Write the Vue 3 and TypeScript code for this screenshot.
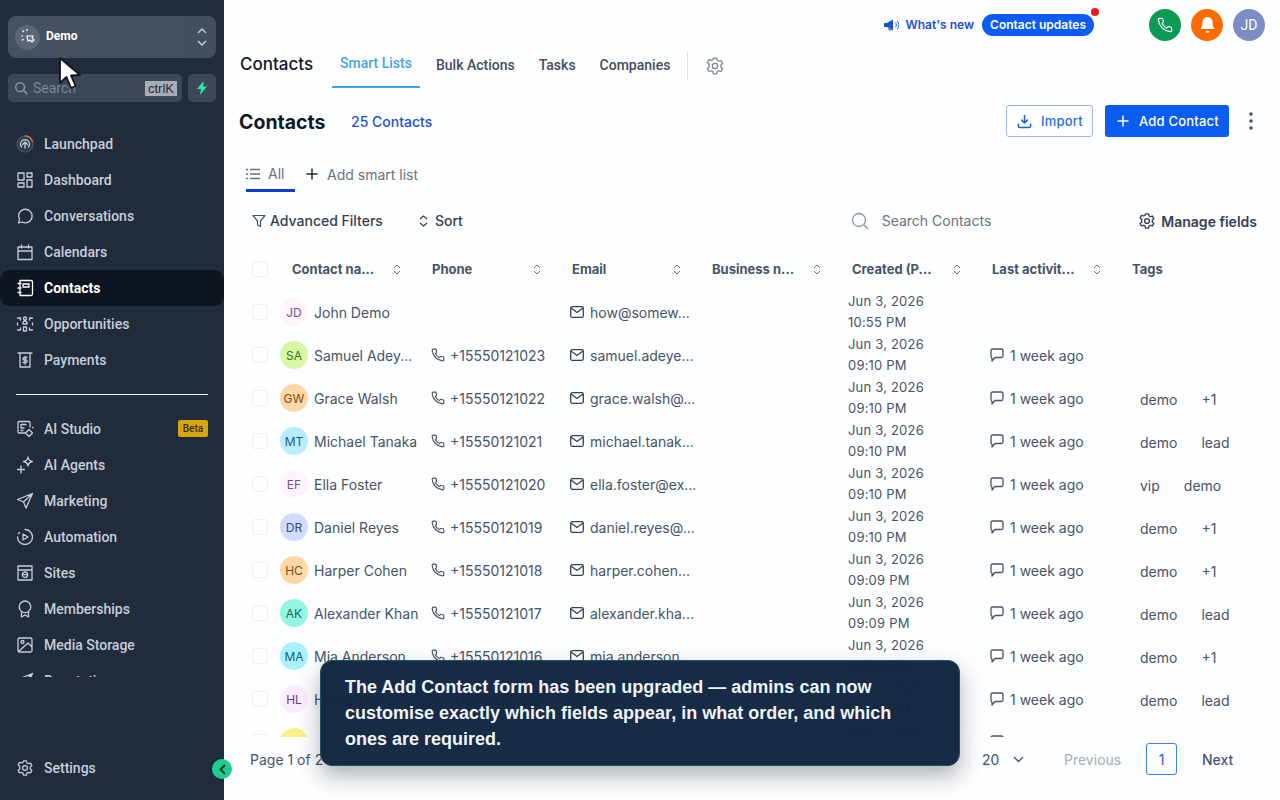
<script setup lang="ts">
interface NavItem { label: string; icon: string; active?: boolean; badge?: string }
interface Row {
  ini: string; bg: string; fg: string; name: string; phone?: string; email: string;
  date: string; time: string; activity?: boolean; tags: string[]
}
const navTop: NavItem[] = [
  { label: 'Launchpad', icon: 'launch' },
  { label: 'Dashboard', icon: 'dash' },
  { label: 'Conversations', icon: 'conv' },
  { label: 'Calendars', icon: 'cal' },
  { label: 'Contacts', icon: 'book', active: true },
  { label: 'Opportunities', icon: 'opp' },
  { label: 'Payments', icon: 'pay' }
]
const navBottom: NavItem[] = [
  { label: 'AI Studio', icon: 'studio', badge: 'Beta' },
  { label: 'AI Agents', icon: 'agents' },
  { label: 'Marketing', icon: 'send' },
  { label: 'Automation', icon: 'auto' },
  { label: 'Sites', icon: 'sites' },
  { label: 'Memberships', icon: 'award' },
  { label: 'Media Storage', icon: 'image' },
  { label: 'Reputation', icon: 'send' }
]
const iconPaths: Record<string, string> = {
  launch: 'M9 13V7M6.500 9.500L9 7l2.500 2.500M5.500 12a4.500 4.500 0 1 1 7 0',
  dash: 'M2 2h6v7H2zM11 2h5v4h-5zM11 9h5v7h-5zM2 12h6v4H2z',
  conv: 'M2.500 16l1-3.400A6.800 6.800 0 1 1 6 15z',
  cal: 'M2 4h14v12.500H2zM2 8h14M5.500 2v3M12.500 2v3',
  book: 'M4 1.500h11a1.500 1.500 0 0 1 1.500 1.500v12a1.500 1.500 0 0 1-1.500 1.500H4zM7 5h6v3H7zM2 4.500h3M2 9h3M2 13.500h3',
  opp: 'M9 2a1.500 1.500 0 1 1 0 3 1.500 1.500 0 0 1 0-3M7 8a2 2 0 0 1 4 0v1H7zM7.500 12h3v4h-3zM1.500 3h3v2M16.500 3h-3v2M1.500 15h3v-2M16.500 15h-3v-2M1.500 8v2M16.500 8v2',
  pay: 'M2 2h14M4 2v14h10V2M11 6.500H8.200a1.200 1.200 0 0 0 0 2.500h1.600a1.200 1.200 0 0 1 0 2.500H7M9 5.500v7.500',
  studio: 'M9 13H3a1 1 0 0 1-1-1V2.500a1 1 0 0 1 1-1h10a1 1 0 0 1 1 1V7M5 4.500h5M5 4.500v3.500h3M5 10.500h2M13 9.500l3.500 3.500-3.500 3.500L9.500 13zM16.500 7.500h.5',
  agents: 'M12 1c.5 3 1.500 4 4.500 4.500-3 .5-4 1.500-4.500 4.500-.5-3-1.500-4-4.500-4.500 3-.5 4-1.500 4.500-4.500zM5 10v7M1.500 13.500h7',
  send: 'M16.500 1.500L1.500 7.500l6 2.500 2.500 6zM7.500 10l9-8.500',
  auto: 'M9 1.500A7.500 7.500 0 1 1 1.500 9M7 6l5 3-5 3zM2.500 5.500l1-1',
  sites: 'M2 2h14v14H2zM2 6h14M9 8a2.700 2.700 0 1 0 0 5.400A2.700 2.700 0 0 0 9 8M6.300 10.700h5.400',
  award: 'M9 1a5.800 5.800 0 0 1 0 11.600A5.800 5.800 0 0 1 9 1M5.500 12v5l3.500-2 3.500 2v-5',
  image: 'M3.500 2h11A1.500 1.500 0 0 1 16 3.500v11a1.500 1.500 0 0 1-1.500 1.500h-11A1.500 1.500 0 0 1 2 14.500v-11A1.500 1.500 0 0 1 3.500 2zM3 15l9-8 4 4M6.500 4.500a1.500 1.500 0 1 1 0 3 1.500 1.500 0 0 1 0-3',
}
const av = {
  pink: ['#fef4fd', '#7a4f87'], lime: ['#d6f8a4', '#3f6b16'], orange: ['#fed9a6', '#7a4a1c'],
  sky: ['#b7edff', '#1c5d85'], blue: ['#cfdcff', '#2b4a8f'], mint: ['#92f6e2', '#146b5f'],
  cyan: ['#a7f2fd', '#155e75'], lilac: ['#fbecff', '#6b3d87'], yellow: ['#fdf08a', '#713f12']
}
const mk = (ini: string, c: string[], name: string, phone: string, email: string, date: string, time: string, activity: boolean, tags: string[]): Row =>
  ({ ini, bg: c[0], fg: c[1], name, phone, email, date, time, activity, tags })
const rows: Row[] = [
  mk('JD', av.pink, 'John Demo', '', 'how@somew...', 'Jun 3, 2026', '10:55 PM', false, []),
  mk('SA', av.lime, 'Samuel Adey...', '+15550121023', 'samuel.adeye...', 'Jun 3, 2026', '09:10 PM', true, []),
  mk('GW', av.orange, 'Grace Walsh', '+15550121022', 'grace.walsh@...', 'Jun 3, 2026', '09:10 PM', true, ['demo', '+1']),
  mk('MT', av.sky, 'Michael Tanaka', '+15550121021', 'michael.tanak...', 'Jun 3, 2026', '09:10 PM', true, ['demo', 'lead']),
  mk('EF', av.pink, 'Ella Foster', '+15550121020', 'ella.foster@ex...', 'Jun 3, 2026', '09:10 PM', true, ['vip', 'demo']),
  mk('DR', av.blue, 'Daniel Reyes', '+15550121019', 'daniel.reyes@...', 'Jun 3, 2026', '09:10 PM', true, ['demo', '+1']),
  mk('HC', av.orange, 'Harper Cohen', '+15550121018', 'harper.cohen...', 'Jun 3, 2026', '09:09 PM', true, ['demo', '+1']),
  mk('AK', av.mint, 'Alexander Khan', '+15550121017', 'alexander.kha...', 'Jun 3, 2026', '09:09 PM', true, ['demo', 'lead']),
  mk('MA', av.cyan, 'Mia Anderson', '+15550121016', 'mia.anderson...', 'Jun 3, 2026', '09:09 PM', true, ['demo', '+1']),
  mk('HL', av.lilac, 'Henry Lee', '+15550121015', 'henry.lee@...', 'Jun 3, 2026', '09:09 PM', true, ['demo', 'lead']),
  mk('LM', av.yellow, 'Lily Moore', '+15550121014', 'lily.moore@...', 'Jun 3, 2026', '09:09 PM', true, ['demo', '+1'])
]
const heads = ['Contact na...', 'Phone', 'Email', 'Business n...', 'Created (P...', 'Last activit...', 'Tags']
</script>

<template>
  <div class="app">
    <aside class="side">
      <div class="org">
        <span class="org-ic">
          <svg width="18" height="18" viewBox="0 0 18 18" fill="none" stroke="#fff" stroke-width="1.200"><path d="M8 8h6l-1 2 2 2-2 2-2-2-2 1zM4 8H2M5 4L3.500 2.500M8 3V1M4.500 11L3 12.500"/></svg>
        </span>
        <span class="org-name">Demo</span>
        <svg class="org-sw" width="10" height="24" viewBox="0 0 10 24" fill="none" stroke="#cbd2dc" stroke-width="1.400"><path d="M1 8l4-4 4 4M1 16l4 4 4-4"/></svg>
      </div>
      <div class="search-row">
        <div class="sbox">
          <svg width="14" height="14" viewBox="0 0 16 16" fill="none" stroke="#8d96a4" stroke-width="1.700"><circle cx="7" cy="7" r="5"/><path d="M11 11l4 4"/></svg>
          <span class="s-txt">Search</span>
          <span class="kbd">ctrlK</span>
        </div>
        <div class="bolt">
          <svg width="12" height="14" viewBox="0 0 12 14" fill="#2ee6a6"><path d="M7.500 0L1 8h4l-1 6 7-8.500H7z"/></svg>
        </div>
      </div>
      <nav class="nav">
        <div v-for="n in navTop" :key="n.label" class="nav-i" :class="{ on: n.active }">
          <svg width="18" height="18" viewBox="0 0 18 18" fill="none" stroke="currentColor" stroke-width="1.300" stroke-linejoin="round" stroke-linecap="round">
            <template v-if="n.icon === 'launch'">
              <circle cx="9" cy="9" r="8" fill="#2f3a4b" stroke="#4d5868" stroke-width="1.200"/>
              <path d="M9 1a8 8 0 0 1 7.500 5.200" stroke="#e0743a" stroke-width="1.300"/>
            </template>
            <path :d="iconPaths[n.icon]"/>
          </svg>
          <span>{{ n.label }}</span>
        </div>
        <div class="divider"></div>
        <div v-for="n in navBottom" :key="n.label" class="nav-i">
          <svg width="18" height="18" viewBox="0 0 18 18" fill="none" stroke="currentColor" stroke-width="1.300" stroke-linejoin="round" stroke-linecap="round"><path :d="iconPaths[n.icon]"/></svg>
          <span>{{ n.label }}</span>
          <em v-if="n.badge" class="beta">{{ n.badge }}</em>
        </div>
      </nav>
      <div class="nav-i settings">
        <svg width="18" height="18" viewBox="0 0 24 24" fill="none" stroke="currentColor" stroke-width="1.700" stroke-linejoin="round"><circle cx="12" cy="12" r="3.200"/><path d="M10 2.500h4l.6 2.800 1.900 1 2.700-.9 2 3.400-2.100 1.900v2.600l2.100 1.900-2 3.400-2.700-.9-1.900 1-.6 2.800h-4l-.6-2.800-1.900-1-2.700.9-2-3.400 2.100-1.900V9.700L2.800 7.800l2-3.400 2.700.9 1.900-1z"/></svg>
        <span>Settings</span>
      </div>
    </aside>

    <main class="main">
      <header class="top">
        <svg width="15" height="12" viewBox="0 0 15 12" fill="#1d4ed8"><path d="M0 4h3l6-3.500v11L3 8H0zM4 8.500l1 3h2l-1-2.500z"/><path d="M11 3.500a3 3 0 0 1 0 5M13 2a5 5 0 0 1 0 8" fill="none" stroke="#1d4ed8" stroke-width="1"/></svg>
        <span class="wn">What's new</span>
        <span class="pill">Contact updates<i class="dot"></i></span>
        <span class="circ green">
          <svg width="16" height="16" viewBox="0 0 24 24" fill="none" stroke="#fff" stroke-width="1.800"><path d="M22 17v3a2 2 0 0 1-2.200 2A19.800 19.800 0 0 1 2 4.200 2 2 0 0 1 4 2h3a2 2 0 0 1 2 1.700l.5 3a2 2 0 0 1-.6 1.800L7.600 9.800a16 16 0 0 0 6.600 6.600l1.300-1.300a2 2 0 0 1 1.800-.6l3 .5A2 2 0 0 1 22 17z"/></svg>
        </span>
        <span class="circ orange">
          <svg width="17" height="18" viewBox="0 0 17 18" fill="#fff"><path d="M8.500 1a5 5 0 0 1 5 5c0 4 1 5.500 2 7H1.500c1-1.500 2-3 2-7a5 5 0 0 1 5-5zM6.500 15h4a2 2 0 0 1-4 0z"/></svg>
        </span>
        <span class="circ jd">JD</span>
      </header>

      <div class="subnav">
        <span class="sn-title">Contacts</span>
        <span class="sn-tab active">Smart Lists</span>
        <span class="sn-tab">Bulk Actions</span>
        <span class="sn-tab">Tasks</span>
        <span class="sn-tab">Companies</span>
        <span class="sn-div"></span>
        <svg class="sn-gear" width="20" height="20" viewBox="0 0 24 24" fill="none" stroke="#7b8494" stroke-width="1.500" stroke-linejoin="round"><circle cx="12" cy="12" r="3.200"/><path d="M10 2.500h4l.6 2.800 1.900 1 2.700-.9 2 3.400-2.100 1.900v2.600l2.100 1.900-2 3.400-2.700-.9-1.900 1-.6 2.800h-4l-.6-2.800-1.900-1-2.700.9-2-3.400 2.100-1.900V9.700L2.800 7.800l2-3.400 2.700.9 1.900-1z"/></svg>
      </div>

      <div class="title-row">
        <h1>Contacts</h1>
        <span class="count">25 Contacts</span>
        <button class="btn ghost">
          <svg width="15" height="15" viewBox="0 0 16 16" fill="none" stroke="#1d5fe0" stroke-width="1.600"><path d="M8 1v8M4.500 6L8 9.500 11.500 6M1.500 10v3a1.500 1.500 0 0 0 1.500 1.500h10a1.500 1.500 0 0 0 1.500-1.500v-3"/></svg>
          Import
        </button>
        <button class="btn solid">
          <svg width="12" height="12" viewBox="0 0 12 12" stroke="#fff" stroke-width="1.500"><path d="M6 .5v11M.5 6h11"/></svg>
          Add Contact
        </button>
        <svg class="kebab" width="4" height="18" viewBox="0 0 4 18" fill="#4b5563"><circle cx="2" cy="2" r="1.800"/><circle cx="2" cy="9" r="1.800"/><circle cx="2" cy="16" r="1.800"/></svg>
      </div>

      <div class="lists">
        <div class="list-all">
          <svg width="14" height="12" viewBox="0 0 14 12" stroke="#667085" stroke-width="1.300"><path d="M4 1.500h10M4 6h10M4 10.500h10M0 1.500h2M0 6h2M0 10.500h2"/></svg>
          <span>All</span>
        </div>
        <div class="list-add">
          <svg width="12" height="12" viewBox="0 0 12 12" stroke="#1f2937" stroke-width="1.500"><path d="M6 .5v11M.5 6h11"/></svg>
          <span>Add smart list</span>
        </div>
      </div>

      <div class="filters">
        <svg width="14" height="14" viewBox="0 0 14 14" fill="none" stroke="#475467" stroke-width="1.200" stroke-linejoin="round"><path d="M1 1.500h12L8.500 7v5.500l-3-1.500V7z"/></svg>
        <span class="f-l">Advanced Filters</span>
        <svg class="f-sort" width="9" height="12" viewBox="0 0 9 12" fill="none" stroke="#344054" stroke-width="1.300"><path d="M1 4l3.500-3L8 4M1 8l3.500 3L8 8"/></svg>
        <span class="f-l">Sort</span>
        <svg class="f-search" width="18" height="18" viewBox="0 0 18 18" fill="none" stroke="#8a93a0" stroke-width="1.300"><circle cx="8" cy="8" r="6.500"/><path d="M13 13l4 4"/></svg>
        <span class="f-ph">Search Contacts</span>
        <svg class="f-gear" width="18" height="18" viewBox="0 0 24 24" fill="none" stroke="#344054" stroke-width="1.800" stroke-linejoin="round"><circle cx="12" cy="12" r="3.200"/><path d="M10 2.500h4l.6 2.800 1.900 1 2.700-.9 2 3.400-2.100 1.900v2.600l2.100 1.900-2 3.400-2.700-.9-1.900 1-.6 2.800h-4l-.6-2.800-1.900-1-2.700.9-2-3.400 2.100-1.900V9.700L2.800 7.800l2-3.400 2.700.9 1.900-1z"/></svg>
        <span class="f-m">Manage fields</span>
      </div>

      <div class="thead grid">
        <div class="ck-cell"><i class="ck"></i></div>
        <div v-for="(h, i) in heads" :key="h" class="th">
          <span>{{ h }}</span>
          <svg v-if="i < 6" width="8" height="11" viewBox="0 0 8 11" fill="none" stroke="#667085" stroke-width="1"><path d="M1 4l3-3 3 3M1 7l3 3 3-3"/></svg>
        </div>
      </div>

      <div class="tbody">
        <div v-for="r in rows" :key="r.ini + r.name" class="grid tr">
          <div class="ck-cell"><i class="ck"></i></div>
          <div class="c-name">
            <span class="avatar" :style="{ background: r.bg, color: r.fg }">{{ r.ini }}</span>
            <span>{{ r.name }}</span>
          </div>
          <div class="c-ic">
            <template v-if="r.phone">
              <svg width="14" height="14" viewBox="0 0 24 24" fill="none" stroke="#475467" stroke-width="2"><path d="M22 17v3a2 2 0 0 1-2.200 2A19.800 19.800 0 0 1 2 4.200 2 2 0 0 1 4 2h3a2 2 0 0 1 2 1.700l.5 3a2 2 0 0 1-.6 1.800L7.600 9.800a16 16 0 0 0 6.600 6.600l1.300-1.300a2 2 0 0 1 1.800-.6l3 .5A2 2 0 0 1 22 17z"/></svg>
              <span>{{ r.phone }}</span>
            </template>
          </div>
          <div class="c-ic c-mail">
            <svg width="14" height="12" viewBox="0 0 14 12" fill="none" stroke="#344054" stroke-width="1.300"><rect x=".7" y=".7" width="12.600" height="10.600" rx="1.500"/><path d="M1 2l6 4.500L13 2"/></svg>
            <span>{{ r.email }}</span>
          </div>
          <div></div>
          <div class="c-date"><span>{{ r.date }}</span><span>{{ r.time }}</span></div>
          <div class="c-ic c-act">
            <template v-if="r.activity">
              <svg width="14" height="14" viewBox="0 0 14 14" fill="none" stroke="#475467" stroke-width="1.300" stroke-linejoin="round"><path d="M2.500 1h9A1.500 1.500 0 0 1 13 2.500V8a1.500 1.500 0 0 1-1.500 1.500H5L2 13V10a1.500 1.500 0 0 1-1-1.500v-6A1.500 1.500 0 0 1 2.500 1z"/></svg>
              <span>1 week ago</span>
            </template>
          </div>
          <div class="c-tags"><span v-for="t in r.tags" :key="t" class="tag">{{ t }}</span></div>
        </div>
      </div>

      <footer class="pager">
        <span class="p-info">Page 1 of 2</span>
        <span class="p-size">20
          <svg width="11" height="7" viewBox="0 0 11 7" fill="none" stroke="#4b5563" stroke-width="1.400"><path d="M1 1l4.500 4.500L10 1"/></svg>
        </span>
        <span class="p-prev">Previous</span>
        <span class="p-num">1</span>
        <span class="p-next">Next</span>
      </footer>
    </main>

    <button class="collapse" aria-label="Collapse">
      <svg width="7" height="11" viewBox="0 0 7 11" fill="none" stroke="#0f3a33" stroke-width="2"><path d="M6 1L1.500 5.500 6 10"/></svg>
    </button>

    <div class="toast">The Add Contact form has been upgraded — admins can now customise exactly which fields appear, in what order, and which ones are required.</div>

    <svg class="cursor" width="24" height="34" viewBox="0 0 24 34"><path d="M2 1v25l6.500-6 4.500 11 4.500-2-4.500-10.500 9-.5z" fill="#fff" stroke="#12161f" stroke-width="1.800" stroke-linejoin="round"/></svg>
  </div>
</template>

<style>
html, body { margin: 0; background: #fdfeff; }
</style>

<style scoped>
.app { position: relative; width: 1280px; height: 800px; overflow: hidden; display: flex; font-family: Inter, "Liberation Sans", sans-serif; background: #fdfeff; }
.side { width: 224px; height: 800px; flex: none; background: #202b3c; display: flex; flex-direction: column; font-family: Roboto, "Liberation Sans", sans-serif; }
.org { margin: 16px 8px 0; height: 42px; border-radius: 8px; background: linear-gradient(90deg, #465162, #434e5f); display: flex; align-items: center; padding: 0 9px 0 7px; box-sizing: border-box; }
.org-ic { width: 25px; height: 25px; border-radius: 50%; background: #5b6676; display: flex; align-items: center; justify-content: center; }
.org-name { margin: 0 0 2px 6px; color: #fff; font-size: 12px; font-weight: 700; flex: 1; }
.search-row { margin: 16px 8px 0; display: flex; gap: 6px; height: 28px; }
.sbox { flex: 1; background: #3c4757; border-radius: 5px; display: flex; align-items: center; padding: 0 5px 0 6px; gap: 3px; }
.s-txt { flex: 1; color: #7e8796; font-size: 14px; margin-left: 2px; }
.kbd { background: #a9aeb5; color: #1f2937; font-size: 13px; padding: 0 3px; height: 15px; line-height: 15px; font-family: "Liberation Sans", sans-serif; }
.bolt { width: 28px; background: #3c4757; border-radius: 5px; display: flex; align-items: center; justify-content: center; }
.nav { margin-top: 24px; height: 551px; overflow: hidden; }
.nav-i { height: 36px; display: flex; align-items: center; padding: 0 16px; gap: 10px; color: #c7ced8; font-size: 14px; font-weight: 500; position: relative; }
.nav-i svg { flex: none; }
.nav-i.on { background: #0d1422; color: #fff; font-weight: 700; border-radius: 10px; }
.divider { height: 1px; background: #eef1f5; margin: 16px 16px; }
.beta { position: absolute; right: 16px; top: 9px; background: #d9a50f; color: #3a3010; font-style: normal; font-size: 10px; font-weight: 500; height: 17px; line-height: 17px; width: 30px; text-align: center; border-radius: 2px; }
.settings { margin-top: auto; margin-bottom: 14px; }

.main { flex: 1; min-width: 0; display: flex; flex-direction: column; height: 800px; overflow: hidden; }
.top { height: 44px; flex: none; display: flex; align-items: flex-start; justify-content: flex-end; padding: 9px 15px 0 0; box-sizing: border-box; }
.top > svg { margin-top: 10px; margin-right: 7px; }
.wn { color: #1d4ed8; font-size: 12px; font-weight: 600; line-height: 32px; margin-right: 8px; }
.pill { position: relative; background: #0b5cf5; color: #fff; font-size: 12px; font-weight: 600; height: 22px; line-height: 22px; padding: 0 8px; border-radius: 11px; margin: 5px 55px 0 0; }
.dot { position: absolute; right: -5px; top: -6px; width: 8px; height: 8px; background: #e5201c; border-radius: 50%; }
.circ { width: 32px; height: 32px; border-radius: 50%; display: flex; align-items: center; justify-content: center; margin-left: 10px; color: #fff; font-size: 14px; }
.circ.green { background: #0d9a55; margin-left: 0; }
.circ.orange { background: #ff6a00; }
.circ.jd { background: #7b8dc4; font-family: Roboto, sans-serif; }

.subnav { height: 44px; flex: none; display: flex; align-items: stretch; padding-left: 16px; font-family: Roboto, sans-serif; }
.sn-title { font-family: Inter, sans-serif; font-size: 17px; font-weight: 500; color: #111827; line-height: 40px; margin-right: 19px; }
.sn-tab { padding: 0 8px; margin-right: 8px; font-size: 14px; font-weight: 500; color: #454e5c; line-height: 42px; }
.sn-tab.active { color: #4aa3df; line-height: 39px; border-bottom: 2px solid #3ba5e0; }
.sn-div { width: 1px; background: #dfe3e8; margin: 8px 0 8px 1px; }
.sn-gear { margin: 12px 0 0 17px; }

.title-row { flex: none; height: 66px; display: flex; align-items: flex-start; padding: 17px 27px 0 15px; box-sizing: border-box; }
.title-row h1 { margin: 0; font-size: 19.500px; font-weight: 700; color: #101828; line-height: 34px; width: 112px; }
.count { color: #1d4ed8; font-size: 14px; font-weight: 500; line-height: 34px; margin-right: auto; }
.btn { height: 32px; border-radius: 3px; font: 500 13px/1 Inter, sans-serif; letter-spacing: .2px; display: flex; align-items: center; box-sizing: border-box; }
.btn.ghost { width: 87px; border: 1px solid #9db8ee; background: #fff; color: #2b6be4; gap: 9px; padding: 0 0 0 10px; margin-right: 12px; }
.btn.solid { width: 124px; border: 0; background: #0b5cf0; color: #fff; gap: 10px; padding: 0 0 0 12px; margin-right: 20px; }
.kebab { margin-top: 7px; }

.lists { height: 38px; flex: none; display: flex; padding-left: 22px; font-size: 14px; color: #6b7280; }
.list-all { width: 49px; display: flex; align-items: center; gap: 8px; border-bottom: 3px solid #0b3bd1; box-sizing: border-box; height: 38px; padding-top: 4px; }
.list-add { display: flex; align-items: center; gap: 9px; margin-left: 11px; padding-top: 2px; }

.filters { height: 57px; flex: none; display: flex; align-items: center; padding: 0 23px 0 28px; font-size: 14px; }
.f-l { color: #344054; font-weight: 500; margin-left: 4px; }
.f-sort { margin-left: 36px; margin-right: 3px; }
.f-search { margin-left: auto; margin-right: 1px; }
.f-ph { color: #6b7280; margin-left: 12px; margin-right: 147px; }
.f-gear { margin: 0 5px 0 0; }
.f-m { color: #344054; font-weight: 600; padding-top: 1px; }

.grid { display: grid; grid-template-columns: 40px repeat(7, 140px); margin-left: 16px; }
.thead { height: 42px; flex: none; padding-bottom: 2px; box-sizing: border-box; }
.ck-cell { display: flex; align-items: center; justify-content: center; }
.ck { width: 16px; height: 16px; box-sizing: border-box; border: 1px solid #eef0f3; border-radius: 3px; display: block; }
.th { display: flex; align-items: center; justify-content: space-between; padding: 0 19px 0 12px; font-size: 13px; font-weight: 700; color: #475467; }
.tbody { height: 446px; flex: none; overflow: hidden; }
.tr { height: 43px; border-bottom: 1px solid #f9fafb; box-sizing: border-box; font-size: 14px; color: #475467; }
.c-name { display: flex; align-items: center; gap: 6px; white-space: nowrap; }
.avatar { width: 28px; height: 28px; border-radius: 50%; flex: none; display: flex; align-items: center; justify-content: center; font-size: 12px; }
.c-ic { display: flex; align-items: center; gap: 5px; padding-left: 11px; white-space: nowrap; }
.c-mail { padding-left: 10px; gap: 6px; }
.c-act { padding-left: 10px; gap: 6px; }
.c-date { display: flex; flex-direction: column; justify-content: center; padding-left: 8px; font-size: 13px; line-height: 21px; letter-spacing: .2px; }
.c-tags { display: flex; align-items: center; gap: 8px; padding: 2px 0 0 12px; }
.tag { padding: 0 8px; }

.pager { height: 44px; flex: none; display: flex; align-items: center; padding-left: 26px; font-size: 14px; color: #475467; }
.p-info { width: 719px; }
.p-size { display: flex; align-items: center; gap: 14px; width: 95px; box-sizing: border-box; padding-left: 12px; height: 32px; border: 1px solid #f5f6f8; border-width: 0 0 0 1px; }
.p-prev { color: #a6adb8; width: 82px; }
.p-num { width: 31px; height: 32px; box-sizing: border-box; border: 1px solid #3b82e6; border-radius: 3px; color: #1d5fe0; display: flex; align-items: center; justify-content: center; margin-right: 25px; }
.p-next { color: #475467; font-weight: 500; }

.collapse { position: absolute; left: 212px; top: 759px; width: 20px; height: 20px; border-radius: 50%; border: 0; padding: 0; background: #1fce8f; display: flex; align-items: center; justify-content: center; }
.toast { position: absolute; left: 320px; top: 660px; width: 640px; height: 106px; box-sizing: border-box; padding: 13px 24px; background: rgba(18, 39, 64, .98); border: 1px solid #1f5560; border-radius: 12px; color: #eef3fa; font: 700 18px/26px "Liberation Sans", sans-serif; box-shadow: 0 10px 22px rgba(20, 30, 45, .34); }
.toast::after { content: ""; position: absolute; left: 0; right: 0; top: 120px; height: 1px; background: #eceef1; }
.cursor { position: absolute; left: 58px; top: 57px; }
</style>
